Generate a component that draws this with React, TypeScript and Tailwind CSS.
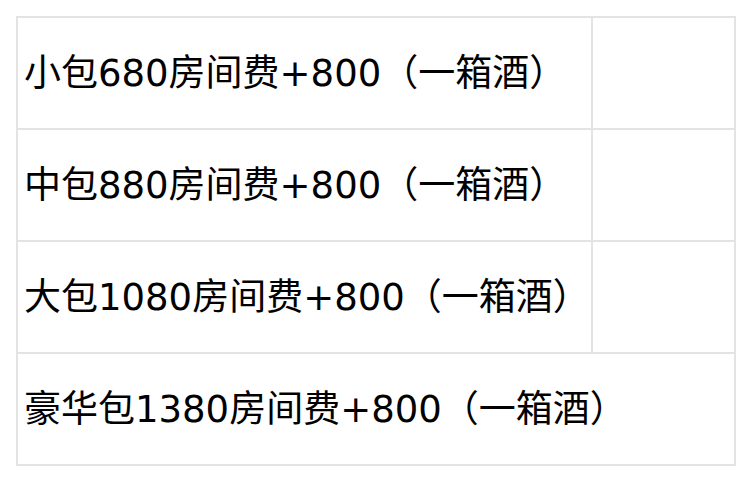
const rows = [
  { text: "小包680房间费+800（一箱酒）", span: false },
  { text: "中包880房间费+800（一箱酒）", span: false },
  { text: "大包1080房间费+800（一箱酒）", span: false },
  { text: "豪华包1380房间费+800（一箱酒）", span: true },
];

export default function App() {
  return (
    <div className="min-h-[480px] bg-white p-4 font-['DejaVu_Sans','Noto_Sans_CJK_SC',sans-serif]">
      <table className="w-[718px] table-fixed border-collapse border-2 border-[#e3e3e3]">
        <colgroup>
          <col className="w-[575px]" />
          <col className="w-[143px]" />
        </colgroup>
        <tbody>
          {rows.map((row) => (
            <tr key={row.text} className="h-[112px]">
              <td
                colSpan={row.span ? 2 : 1}
                className="border-2 border-[#e3e3e3] px-[6px] text-[37px] leading-none text-black whitespace-nowrap"
              >
                {row.text}
              </td>
              {!row.span && <td className="border-2 border-[#e3e3e3]"></td>}
            </tr>
          ))}
        </tbody>
      </table>
    </div>
  );
}
